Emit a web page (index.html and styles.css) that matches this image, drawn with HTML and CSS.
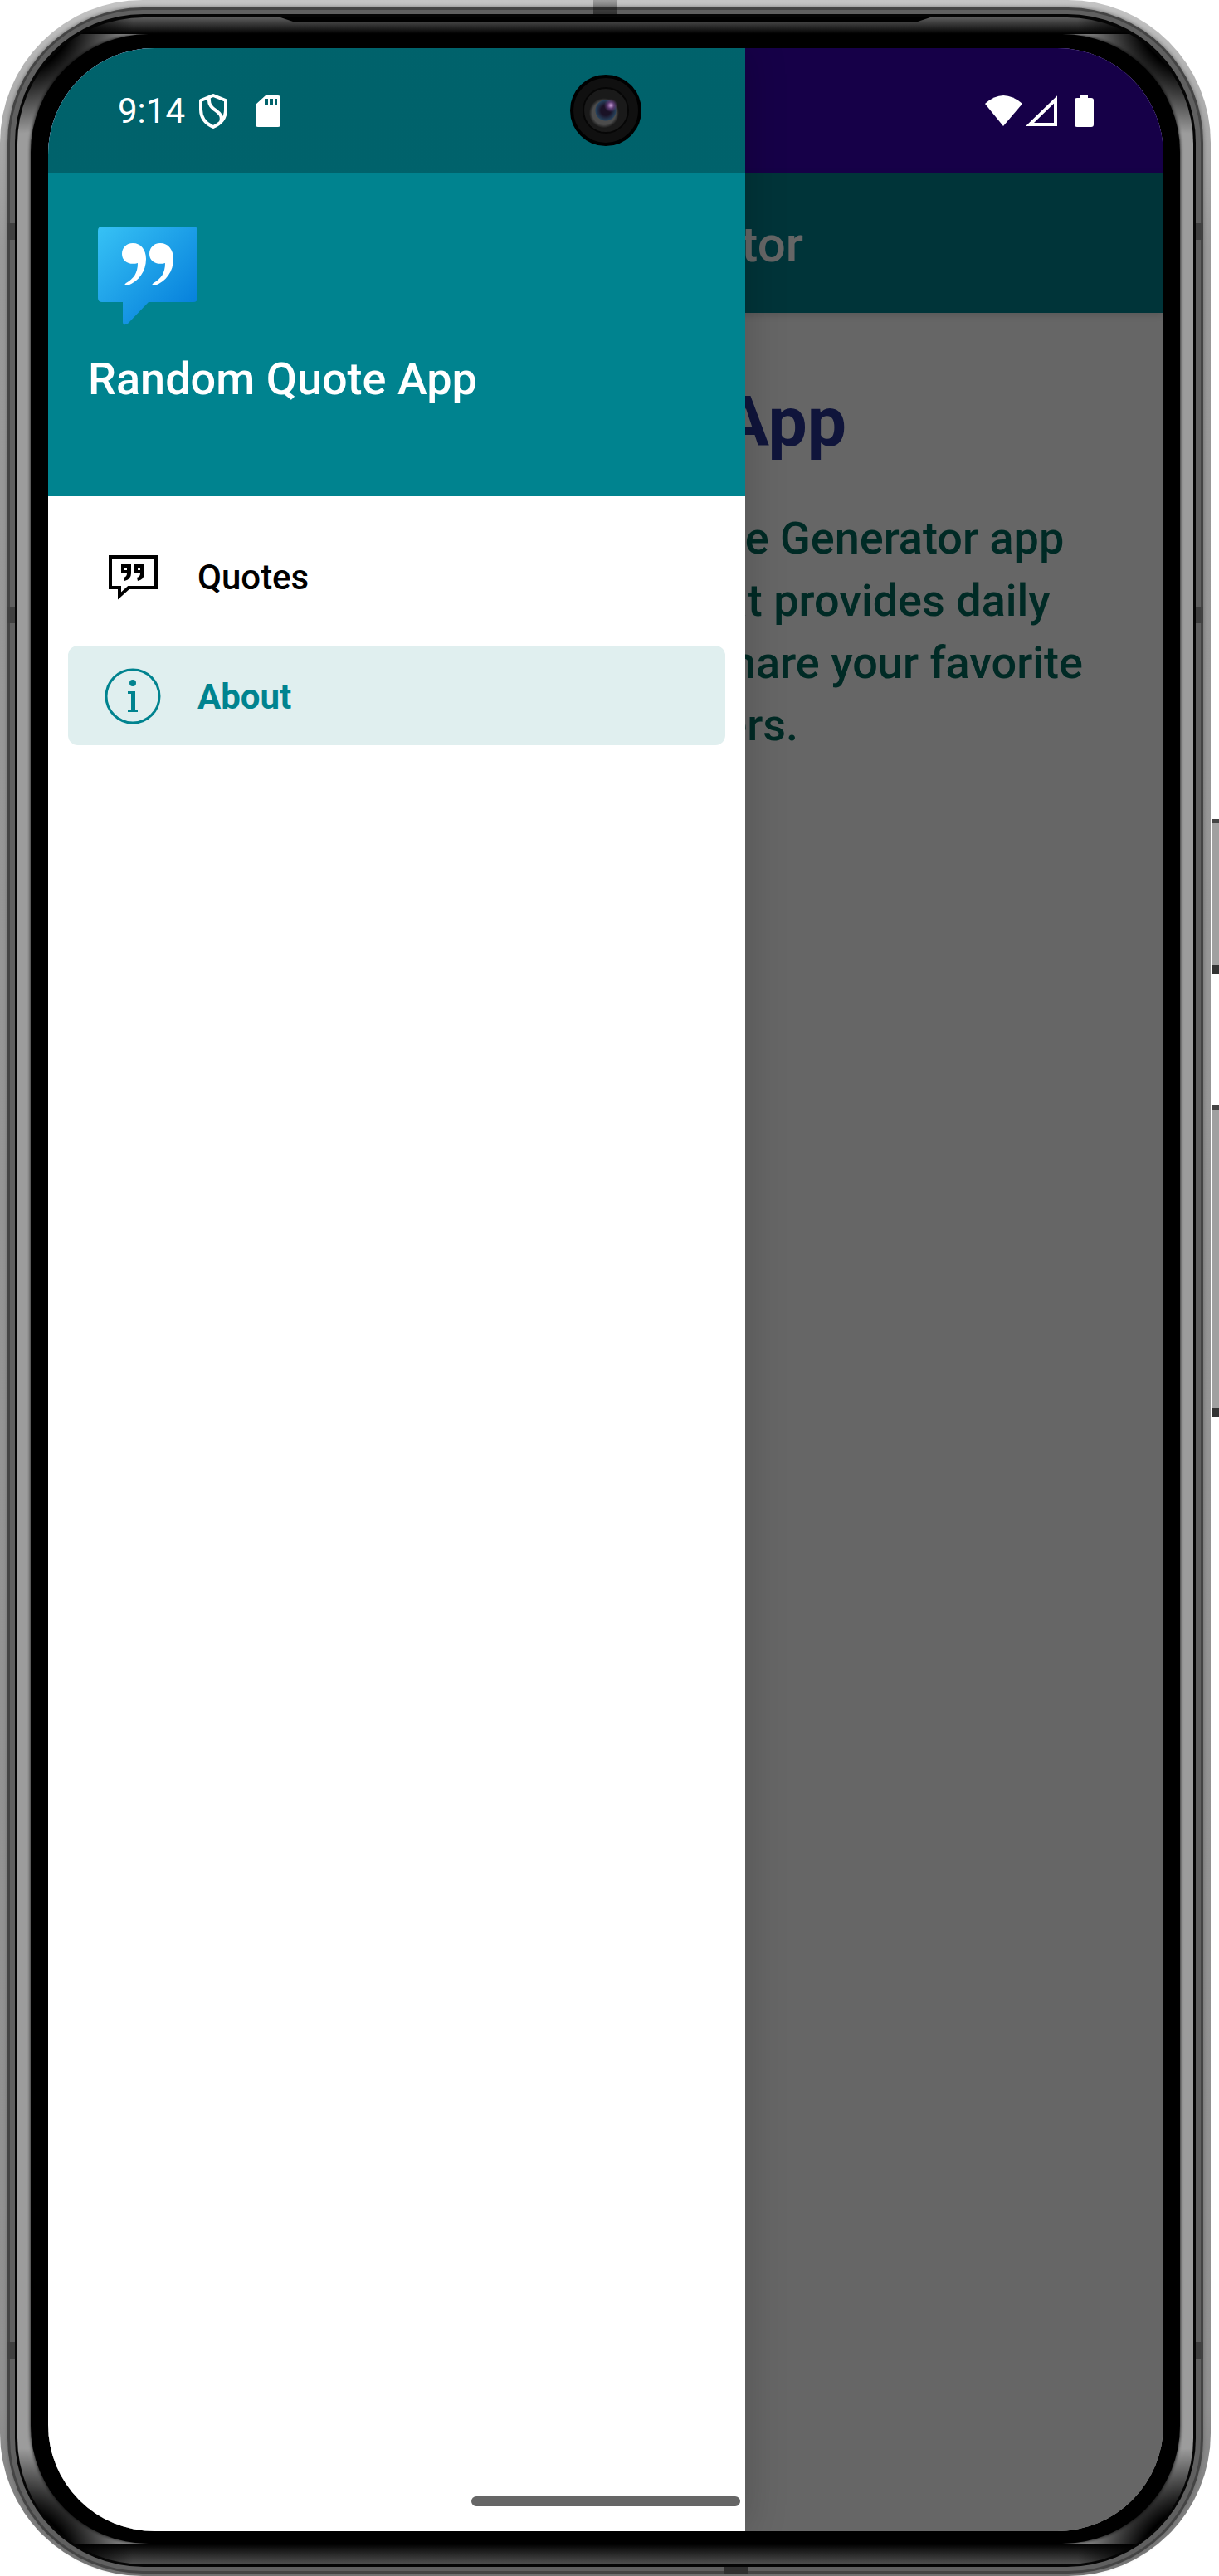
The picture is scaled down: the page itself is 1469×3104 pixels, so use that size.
FILE: index.html
```html
<!DOCTYPE html>
<html lang="en">
<head>
<meta charset="utf-8">
<meta name="viewport" content="width=device-width, initial-scale=1">
<title>Random Quote App</title>
<link rel="stylesheet" href="styles.css">
</head>
<body>
<div class="phone">
  <div class="side-button power"></div>
  <div class="side-button volume"></div>
  <div class="rim"><div class="band"><div class="groove"><div class="bevel"><div class="bezel">
    <div class="screen">
      <main class="app">
        <div class="app-status"></div>
        <header class="toolbar"><span class="toolbar-title"><span class="covered">Random Quote </span>Generator</span></header>
        <article class="about">
          <h1><span class="covered">About This </span>App</h1>
          <p><span class="covered">Welcome to the Random </span>Quote Generator app<br><span class="covered">This is an Android project </span>that provides daily<br><span class="covered">inspirational quotes. Try and </span>share your favorite<br><span class="covered">quotes with </span>others.</p>
        </article>
      </main>
      <div class="scrim"></div>
      <aside class="drawer">
        <header class="drawer-header">
          <svg class="logo" viewBox="0 0 120 120" aria-hidden="true">
            <defs><linearGradient id="bubble" x1="0" y1="0" x2="1" y2="1"><stop offset="0" stop-color="#37c2f5"/><stop offset="1" stop-color="#0078d8"/></linearGradient></defs>
            <path fill="url(#bubble)" d="M5 0h110q5 0 5 5v81q0 5-5 5H61L36 117q-6 3-6-2V91H5q-5 0-5-5V5q0-5 5-5z"/>
            <g fill="#fff"><path id="comma" d="M42 20c10 0 16 8 16 19 0 15-9 27-22 32q-6 0-2-3c9-5 14-12 14-24-10 3-19-2-19-11 0-7 5-13 13-13z"/><use href="#comma" x="33"/></g>
          </svg>
          <h2>Random Quote App</h2>
        </header>
        <nav>
          <a class="nav-item" href="#quotes">
            <svg class="nav-icon" viewBox="0 0 72 72" aria-hidden="true"><path fill="none" stroke="currentColor" stroke-width="4" d="M9 11h55v37H31L20 58V48H9z"/><path fill="currentColor" fill-rule="evenodd" d="M22 20h12v11q0 7-8 9l-1-4q4-1 4-5h-7zM26 24v3h3v-3zM38 20h12v11q0 7-8 9l-1-4q4-1 4-5h-7zM42 24v3h3v-3z"/></svg>
            <span>Quotes</span>
          </a>
          <a class="nav-item selected" href="#about" aria-current="page">
            <svg class="nav-icon" viewBox="0 0 72 72" aria-hidden="true"><circle cx="36" cy="35" r="32" fill="none" stroke="currentColor" stroke-width="3"/><circle cx="36" cy="19" r="4" fill="currentColor"/><path fill="currentColor" d="M30 29h9v22h3v3H30v-3h4V32h-4z"/></svg>
            <span>About</span>
          </a>
        </nav>
      </aside>
      <div class="status">
        <span class="clock">9:14</span>
        <svg class="shield" viewBox="0 0 34 42" aria-hidden="true"><path fill="none" stroke="#fff" stroke-width="4" stroke-linejoin="round" d="M17 2l15 6v11c0 10-6 17-15 21C8 36 2 29 2 19V8zM12 5c-2 17 19 14 14 29"/></svg>
        <svg class="card" viewBox="0 0 30 38" aria-hidden="true"><path fill="#fff" fill-rule="evenodd" d="M12 0h15q3 0 3 3v32q0 3-3 3H3q-3 0-3-3V11zM11 4v7h4V4zM17 4v7h4V4zM23 4v7h3V4z"/></svg>
        <svg class="signals" viewBox="0 0 131 40" aria-hidden="true"><path fill="#fff" d="M0 11Q22-9 45 11L22 38z"/><path fill="none" stroke="#fff" stroke-width="4" d="M54 36h31V6z"/><path fill="#fff" d="M115 0h9v4h4q3 0 3 3v29q0 3-3 3h-17q-3 0-3-3V7q0-3 3-3h4z"/></svg>
      </div>
      <div class="camera"><div class="lens"></div></div>
      <div class="home-handle"></div>
    </div>
  </div></div></div></div></div>
  <div class="earpiece"></div>
  <i class="seam left high"></i><i class="seam left mid"></i><i class="seam left low"></i>
  <i class="seam right high"></i><i class="seam right mid"></i><i class="seam right low"></i>
  <i class="seam top"></i><i class="seam bottom"></i>
</div>
</body>
</html>
```
FILE: styles.css
```css
* { box-sizing: border-box; }
body {
  margin: 0;
  min-height: 100vh;
  padding-right: 10px;
  display: flex;
  overflow-x: hidden;
  background: #fff;
  font-family: Roboto, sans-serif;
}
h1, h2, p { margin: 0; }

/* Device body: concentric metal rings around the glass */
.phone, .rim, .band, .groove, .bevel, .bezel { flex: 1; display: flex; min-width: 0; }
.phone {
  position: relative;
  padding: 9px 9px 3px;
  border-radius: 172px;
  background: linear-gradient(#c4c4c4, #b0b0b0 100px, #999 300px, #909090 2900px, #777);
}
.rim { padding: 3px; border-radius: 163px; background: #444; box-shadow: 0 0 5px #666; }
.band { padding: 5px 6px; border-radius: 160px; background: #606060; }
.groove { padding: 4px 3px 3px; border-radius: 155px; background: #050505; }
.bevel {
  padding: 20px 16px 25px;
  border-radius: 152px;
  background:
    radial-gradient(circle at 0 0, #000 65px, transparent 140px),
    radial-gradient(circle at 100% 0, #000 65px, transparent 140px),
    radial-gradient(circle at 0 100%, #000 65px, transparent 140px),
    radial-gradient(circle at 100% 100%, #000 65px, transparent 140px),
    linear-gradient(#5c5c5c, #000) 0 0 / 100% 20px no-repeat,
    linear-gradient(#000, #505050) 0 100% / 100% 25px no-repeat,
    #9c9c9c;
}
.bezel { padding: 17px 20px 15px 21px; border-radius: 142px; background: #000; box-shadow: 0 0 4px #000; }

.side-button {
  position: absolute;
  right: -10px;
  width: 9px;
  border-top: 5px solid #444;
  border-bottom: 11px solid #333;
  background: #a0a0a0;
}
.power { top: 987px; height: 187px; }
.volume { top: 1332px; height: 376px; }
.earpiece {
  position: absolute;
  top: 21px;
  left: 338px;
  right: 338px;
  height: 6px;
  background: #000;
  border-bottom: 1px solid #777;
  clip-path: polygon(0 0, 100% 0, calc(100% - 18px) 100%, 18px 100%);
}
.seam { position: absolute; width: 9px; height: 20px; background: #404040; }
.left { left: 9px; }
.right { right: 9px; }
.high { top: 269px; }
.mid { top: 731px; }
.low { bottom: 262px; }
.seam.top { left: 715px; top: 0; width: 29px; height: 19px; background: linear-gradient(rgba(0, 0, 0, .2), rgba(0, 0, 0, .5)); }
.seam.bottom { left: 873px; bottom: 3px; width: 29px; height: 8px; background: #303030; }

/* Screen */
.screen {
  position: relative;
  flex: 1;
  min-width: 0;
  display: grid;
  overflow: hidden;
  border-radius: 128px;
  background: #fff;
}
.app, .scrim, .drawer, .status { grid-area: 1 / 1; min-width: 0; }
.app-status { height: 151px; background: #3700b3; }
.toolbar {
  height: 168px;
  display: flex;
  align-items: center;
  padding: 2px 0 0 230px;
  background: #00838f;
  color: #fff;
  font-size: 60px;
  font-weight: 500;
  white-space: pre;
  box-shadow: 0 3px 9px rgba(0, 0, 0, .15);
}
.about { padding: 72px 48px; text-align: center; white-space: nowrap; }
.about h1 { color: #283593; font-size: 84px; line-height: 120px; font-weight: 700; }
.about p { margin-top: 42px; color: #00695c; font-size: 54px; line-height: 75px; font-weight: 500; }
/* Words behind the open drawer keep their place in the line */
.covered { visibility: hidden; }
.scrim { background: rgba(0, 0, 0, .6); z-index: 1; }

.drawer { z-index: 2; width: 840px; background: #fff; box-shadow: 0 0 48px rgba(0, 0, 0, .2); }
.drawer-header {
  height: 540px;
  padding: 215px 48px 0;
  background: linear-gradient(rgba(0, 0, 0, .25), rgba(0, 0, 0, .25)) 0 0 / 100% 151px no-repeat, #00838f;
  color: #fff;
}
.logo { display: block; width: 120px; height: 120px; margin-left: 12px; }
.drawer-header h2 { margin-top: 32px; font-size: 54px; line-height: 64px; font-weight: 500; }
nav { display: grid; gap: 24px; padding: 36px 24px; }
.nav-item {
  display: flex;
  align-items: center;
  gap: 42px;
  height: 120px;
  padding: 3px 42px 0;
  border-radius: 12px;
  color: #000;
  font-size: 42px;
  font-weight: 500;
  text-decoration: none;
}
.nav-icon { width: 72px; height: 72px; }
.selected { background: #e0efef; color: #00838f; font-weight: 700; }

/* System bars */
.status {
  z-index: 3;
  height: 151px;
  display: flex;
  align-items: center;
  padding: 0 84px;
  color: #fff;
}
.clock { font-size: 42px; }
.shield { width: 34px; height: 42px; margin-left: 17px; }
.card { width: 30px; height: 38px; margin-left: 34px; }
.signals { width: 131px; height: 40px; margin-left: auto; }
.camera {
  position: absolute;
  z-index: 4;
  top: 32px;
  left: calc(50% - 43px);
  width: 86px;
  height: 86px;
  border: 4px solid #000;
  border-radius: 50%;
  background: #101010;
  display: grid;
  place-items: center;
}
.lens {
  width: 56px;
  height: 56px;
  border: 2px solid #060606;
  border-radius: 50%;
  background:
    radial-gradient(circle at 32px 20px, #c9a0d8 0, #5a3a70 4px, transparent 8px),
    radial-gradient(circle at 50% 50%, #1a1226 6px, #26405a 12px, transparent 13px),
    radial-gradient(circle at 46% 56%, #4c4c4c 14px, #1a1a1a 18px);
}
.home-handle {
  position: absolute;
  z-index: 4;
  bottom: 30px;
  left: calc(50% - 162px);
  width: 324px;
  height: 12px;
  border-radius: 6px;
  background: #666;
}
```
